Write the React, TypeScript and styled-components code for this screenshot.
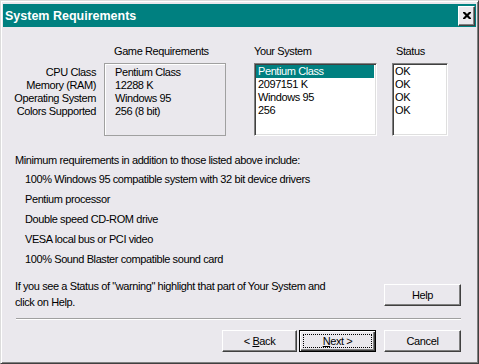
import React from 'react'
import styled, { createGlobalStyle } from 'styled-components'

const face = '#eae8ed'

const GlobalStyle = createGlobalStyle`
  html, body {
    margin: 0;
    padding: 0;
    background: ${face};
  }
  body {
    font-family: "Liberation Sans", Arial, sans-serif;
    font-size: 11px;
    letter-spacing: -0.4px;
    color: #000;
  }
`

const specs = [
  { label: 'CPU Class', game: 'Pentium Class' },
  { label: 'Memory (RAM)', game: '12288 K' },
  { label: 'Operating System', game: 'Windows 95' },
  { label: 'Colors Supported', game: '256 (8 bit)' },
]
const yourSystem = ['Pentium Class', '2097151 K', 'Windows 95', '256']

const extras = [
  '100% Windows 95 compatible system with 32 bit device drivers',
  'Pentium processor',
  'Double speed CD-ROM drive',
  'VESA local bus or PCI video',
  '100% Sound Blaster compatible sound card',
]

export default function App() {
  return (
    <>
      <GlobalStyle />
      <Window>
        <TitleBar>
          <Title>System Requirements</Title>
          <CloseButton aria-label="Close">
            <svg width="8" height="7" viewBox="0 0 8 7">
              <path d="M0 0h2l2 2 2-2h2v1l-2.5 2.5L8 6v1H6L4 5 2 7H0V6l2.5-2.5L0 1z" fill="#000" />
            </svg>
          </CloseButton>
        </TitleBar>

        <Body>
          <Table>
            <LabelCol>
              <Heading />
              <Labels>
                {specs.map(s => <Line key={s.label}>{s.label}</Line>)}
              </Labels>
            </LabelCol>

            <Col $width={122} $gap={8}>
              <Heading $indent={10}>Game Requirements</Heading>
              <GameBox>
                {specs.map(s => <Line key={s.label}>{s.game}</Line>)}
              </GameBox>
            </Col>

            <Col $width={123} $gap={28}>
              <Heading>Your System</Heading>
              <ListBox>
                {yourSystem.map((v, i) => (
                  <ListRow key={i} $selected={i === 0}>{v}</ListRow>
                ))}
              </ListBox>
            </Col>

            <Col $width={56} $gap={15}>
              <Heading $indent={4}>Status</Heading>
              <ListBox>
                {specs.map(s => <ListRow key={s.label} $pad={1}>OK</ListRow>)}
              </ListBox>
            </Col>
          </Table>

          <Intro>Minimum requirements in addition to those listed above include:</Intro>
          <Extras>
            {extras.map(e => <li key={e}>{e}</li>)}
          </Extras>

          <HelpRow>
            <HelpText>
              If you see a Status of "warning" highlight that part of Your System and<br />
              click on Help.
            </HelpText>
            <Button $width={77} $top={6}>Help</Button>
          </HelpRow>

          <Separator />

          <ButtonRow>
            <Button $width={75}><span>&lt; <u>B</u>ack</span></Button>
            <Button $width={77} $default>
              <Focus><span><u>N</u>ext &gt;</span></Focus>
            </Button>
            <Button $width={77} $gapLeft={8}>Cancel</Button>
          </ButtonRow>
        </Body>
      </Window>
    </>
  )
}

const Window = styled.div`
  box-sizing: border-box;
  width: 479px;
  height: 364px;
  display: flex;
  flex-direction: column;
  padding: 3px 2px 2px 2px;
  background: ${face};
  border-top: 1px solid #dcdcdc;
  border-left: 1px solid #dcdcdc;
  border-right: 1px solid #404040;
  border-bottom: 1px solid #404040;
  box-shadow: inset 1px 1px #fff, inset -1px -1px #808080;
`

const TitleBar = styled.div`
  height: 23px;
  flex: 0 0 auto;
  display: flex;
  align-items: center;
  justify-content: space-between;
  padding: 0 1px 0 2px;
  background: #008080;
`

const Title = styled.span`
  color: #fff;
  font-weight: 700;
  font-size: 12.5px;
  letter-spacing: 0;
`

const CloseButton = styled.div`
  box-sizing: border-box;
  width: 17px;
  height: 20px;
  display: flex;
  align-items: center;
  justify-content: center;
  background: ${face};
  border-top: 1px solid #fff;
  border-left: 1px solid #fff;
  border-right: 1px solid #404040;
  border-bottom: 1px solid #404040;
  box-shadow: inset -1px -1px #808080;
`

const Body = styled.div`
  flex: 1;
  display: flex;
  flex-direction: column;
  padding: 18px 15px 0 10px;
`

const Table = styled.div`
  display: flex;
`

const LabelCol = styled.div`
  width: 83px;
  display: flex;
  flex-direction: column;
`

const Col = styled.div<{ $width: number; $gap: number }>`
  width: ${p => p.$width}px;
  margin-left: ${p => p.$gap}px;
  display: flex;
  flex-direction: column;
`

const Heading = styled.div<{ $indent?: number }>`
  height: 13px;
  line-height: 13px;
  margin-bottom: 5px;
  padding-left: ${p => p.$indent ?? 0}px;
  white-space: nowrap;
`

const Labels = styled.div`
  padding-top: 3px;
  text-align: right;
  white-space: nowrap;
`

const Line = styled.div`
  line-height: 13px;
  height: 13px;
`

const GameBox = styled.div`
  box-sizing: border-box;
  height: 73px;
  padding: 2px 4px 0 10px;
  border: 1px solid #a0a0a0;
  box-shadow: inset 1px 1px #fff;
  white-space: nowrap;
`

const ListBox = styled.div`
  box-sizing: border-box;
  height: 73px;
  background: #fff;
  border-top: 1px solid #808080;
  border-left: 1px solid #808080;
  border-right: 1px solid #fff;
  border-bottom: 1px solid #fff;
  box-shadow: inset 1px 1px #404040, inset -1px -1px #dfdfdf;
  padding: 1px 2px 2px 1px;
  overflow: hidden;
`

const ListRow = styled.div<{ $selected?: boolean; $pad?: number }>`
  height: 13px;
  line-height: 13px;
  padding-left: ${p => p.$pad ?? 2}px;
  white-space: nowrap;
  background: ${p => (p.$selected ? '#008080' : 'transparent')};
  color: ${p => (p.$selected ? '#fff' : '#000')};
`

const Intro = styled.div`
  margin-top: 18px;
  padding-left: 2px;
  line-height: 13px;
`

const Extras = styled.ul`
  list-style: none;
  margin: 6px 0 0 12px;
  padding: 0;
  display: flex;
  flex-direction: column;
  gap: 7px;

  li {
    line-height: 13px;
  }
`

const HelpRow = styled.div`
  margin-top: 12px;
  display: flex;
  justify-content: space-between;
  align-items: flex-start;
`

const HelpText = styled.div`
  padding-left: 2px;
  line-height: 16px;
  white-space: nowrap;
`

const Separator = styled.div`
  margin: 8px 0 0 3px;
  border-top: 1px solid #a0a0a0;
  border-bottom: 1px solid #fff;
`

const ButtonRow = styled.div`
  margin-top: 10px;
  display: flex;
  justify-content: flex-end;
  gap: 2px;
`

const Button = styled.button<{ $width: number; $default?: boolean; $top?: number; $gapLeft?: number }>`
  box-sizing: border-box;
  width: ${p => p.$width}px;
  height: 22px;
  margin-top: ${p => p.$top ?? 0}px;
  margin-left: ${p => (p.$gapLeft ? p.$gapLeft - 2 : 0)}px;
  padding: 0;
  display: flex;
  align-items: center;
  justify-content: center;
  font-family: "Liberation Sans", Arial, sans-serif;
  font-size: 11px;
  letter-spacing: -0.4px;
  color: #000;
  background: ${face};
  ${p =>
    p.$default
      ? `
    border: 1px solid #000;
    box-shadow: inset 1px 1px #fff, inset -1px -1px #404040, inset -2px -2px #808080;
  `
      : `
    border-top: 1px solid #fff;
    border-left: 1px solid #fff;
    border-right: 1px solid #404040;
    border-bottom: 1px solid #404040;
    box-shadow: inset -1px -1px #808080;
  `}
`

const Focus = styled.span`
  box-sizing: border-box;
  width: 69px;
  height: 14px;
  display: flex;
  align-items: center;
  justify-content: center;
  border: 1px dotted #000;
  line-height: 12px;
`
